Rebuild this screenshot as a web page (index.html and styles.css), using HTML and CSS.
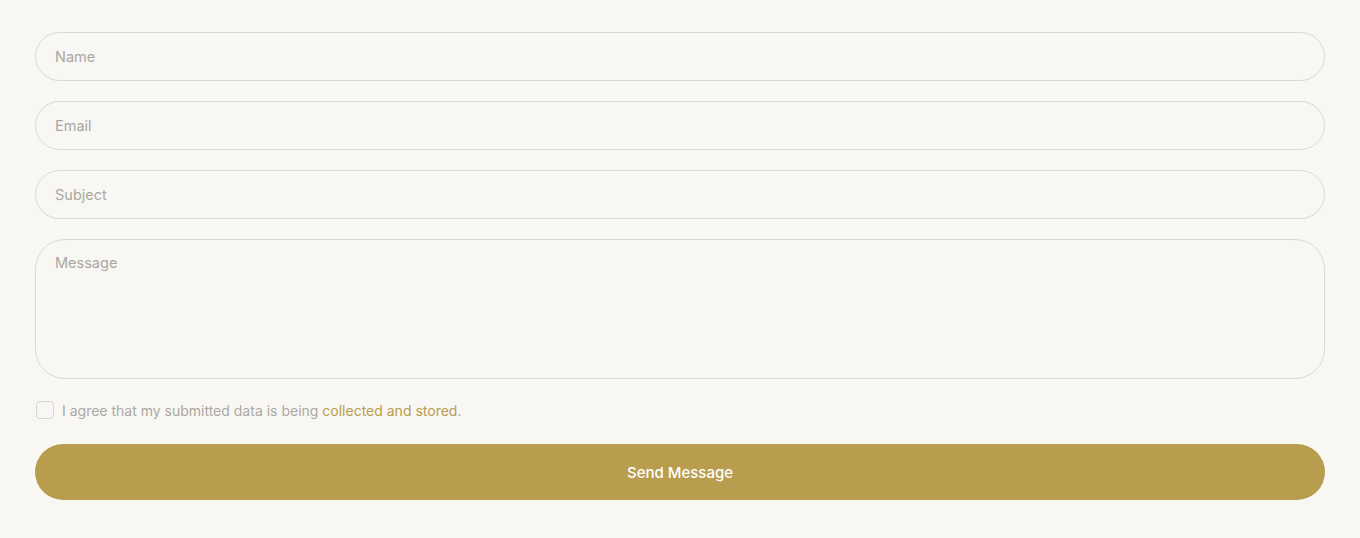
FILE: index.html
```html
<!DOCTYPE html>
<html lang="en">
<head>
<meta charset="utf-8">
<title>Contact</title>
<link rel="stylesheet" href="styles.css">
</head>
<body>
<form class="form">
  <input class="field" type="text" placeholder="Name">
  <input class="field" type="email" placeholder="Email">
  <input class="field" type="text" placeholder="Subject">
  <textarea class="field area" placeholder="Message"></textarea>
  <label class="agree">
    <span class="box"></span>
    <span class="agree-text">I agree that my submitted data is being <a class="link" href="#">collected and stored</a>.</span>
  </label>
  <button class="send" type="button">Send Message</button>
</form>
</body>
</html>
```

FILE: styles.css
```css
html, body {
  margin: 0;
  background: #f8f7f3;
}
body {
  padding: 32px 35px;
  font-family: Inter, "Liberation Sans", sans-serif;
}
.form {
  display: flex;
  flex-direction: column;
  gap: 20px;
}
.field {
  box-sizing: border-box;
  width: 100%;
  height: 49px;
  border: 1px solid #dad8d2;
  border-radius: 25px;
  background: transparent;
  padding: 0 19px 1px;
  font-family: inherit;
  font-size: 14.5px;
  color: #555;
  outline: none;
}
.field::placeholder {
  color: #a9a7a1;
}
.area {
  height: 140px;
  border-radius: 30px;
  padding: 14px 19px;
  resize: none;
  display: block;
}
.agree {
  display: flex;
  align-items: center;
  gap: 8px;
  height: 18px;
  margin-top: 2px;
  padding-left: 1px;
  font-size: 14px;
  color: #aba9a3;
}
.box {
  box-sizing: border-box;
  width: 18px;
  height: 18px;
  border: 1px solid #d8d6d0;
  border-radius: 4px;
}
.link {
  color: #b89d4e;
  text-decoration: none;
}
.send {
  height: 56px;
  margin-top: 5px;
  border: none;
  border-radius: 28px;
  background: #b89d4e;
  color: #fff;
  font-family: inherit;
  font-size: 15px;
  font-weight: 500;
}
```
